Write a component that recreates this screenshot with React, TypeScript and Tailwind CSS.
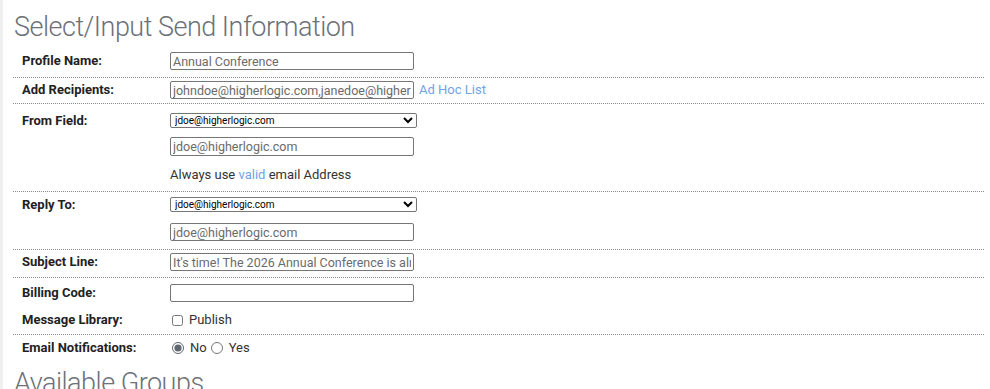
import { useState } from 'react'

const inputCls =
  'h-[18px] w-[244px] rounded-[2px] border border-[#767676] bg-white px-[2px] text-[12.5px] leading-none text-[#6b6b6b] outline-none'
const selectCls =
  'h-[15px] w-[247px] rounded-[2px] border border-[#767676] bg-white text-[10px] leading-none text-black outline-none'
const labelCls = 'flex w-[148px] shrink-0 items-center text-[13px] font-bold text-[#222]'

function App() {
  const [profile, setProfile] = useState('Annual Conference')
  const [recipients, setRecipients] = useState(
    'johndoe@higherlogic.com,janedoe@higherlogic.com'
  )
  const [fromSel, setFromSel] = useState('jdoe@higherlogic.com')
  const [fromAddr, setFromAddr] = useState('jdoe@higherlogic.com')
  const [replySel, setReplySel] = useState('jdoe@higherlogic.com')
  const [replyAddr, setReplyAddr] = useState('jdoe@higherlogic.com')
  const [subject, setSubject] = useState(
    "It's time! The 2026 Annual Conference is almost here"
  )
  const [billing, setBilling] = useState('')
  const [publish, setPublish] = useState(false)
  const [notify, setNotify] = useState('no')

  return (
    <div
      className="flex min-h-screen bg-white"
      style={{ fontFamily: 'Roboto, "Liberation Sans", sans-serif' }}
    >
      <div className="w-[3px] shrink-0 bg-[#efefef]" />
      <div className="flex-1 overflow-hidden pl-[10px] pr-[6px]">
        <h1 className="mt-[10px] pl-[1px] text-[27px] font-light leading-[34px] tracking-[-0.5px] text-[#6d717a]">
          Select/Input Send Information
        </h1>

        {/* Profile name */}
        <div className="flex border-b border-dotted border-[#8a8a8a] pb-[7px] pl-[9px] pt-[8px]">
          <div className={`${labelCls} h-[18px]`}>Profile Name:</div>
          <input
            className={inputCls}
            value={profile}
            onChange={(e) => setProfile(e.target.value)}
          />
        </div>

        {/* Recipients */}
        <div className="flex border-b border-dotted border-[#8a8a8a] pb-[4px] pl-[9px] pt-[3px]">
          <div className={`${labelCls} h-[18px]`}>Add Recipients:</div>
          <input
            className={inputCls}
            value={recipients}
            onChange={(e) => setRecipients(e.target.value)}
          />
          <a href="#" className="ml-[5px] text-[13px] leading-[18px] text-[#6fa3e6]">
            Ad Hoc List
          </a>
        </div>

        {/* From */}
        <div className="flex border-b border-dotted border-[#8a8a8a] pb-[7px] pl-[9px] pt-[9px]">
          <div className={`${labelCls} h-[15px]`}>From Field:</div>
          <div className="flex flex-col">
            <select
              className={selectCls}
              value={fromSel}
              onChange={(e) => setFromSel(e.target.value)}
            >
              <option>jdoe@higherlogic.com</option>
              <option>info@higherlogic.com</option>
            </select>
            <input
              className={`${inputCls} mt-[9px] h-[19px]`}
              value={fromAddr}
              onChange={(e) => setFromAddr(e.target.value)}
            />
            <div className="mt-[10px] text-[13px] leading-[18px] text-[#333]">
              Always use <span className="text-[#6fa3e6]">valid</span> email Address
            </div>
          </div>
        </div>

        {/* Reply to */}
        <div className="flex border-b border-dotted border-[#8a8a8a] pb-[8px] pl-[9px] pt-[5px]">
          <div className={`${labelCls} h-[15px]`}>Reply To:</div>
          <div className="flex flex-col">
            <select
              className={selectCls}
              value={replySel}
              onChange={(e) => setReplySel(e.target.value)}
            >
              <option>jdoe@higherlogic.com</option>
              <option>info@higherlogic.com</option>
            </select>
            <input
              className={`${inputCls} mt-[11px]`}
              value={replyAddr}
              onChange={(e) => setReplyAddr(e.target.value)}
            />
          </div>
        </div>

        {/* Subject */}
        <div className="flex border-b border-dotted border-[#8a8a8a] pb-[6px] pl-[9px] pt-[3px]">
          <div className={`${labelCls} h-[18px]`}>Subject Line:</div>
          <input
            className={inputCls}
            value={subject}
            onChange={(e) => setSubject(e.target.value)}
          />
        </div>

        {/* Billing + library */}
        <div className="border-b border-dotted border-[#8a8a8a] pb-[5px] pl-[9px] pt-[6px]">
          <div className="flex">
            <div className={`${labelCls} h-[18px]`}>Billing Code:</div>
            <input
              className={inputCls}
              value={billing}
              onChange={(e) => setBilling(e.target.value)}
            />
          </div>
          <div className="mt-[9px] flex">
            <div className={`${labelCls} h-[18px]`}>Message Library:</div>
            <label className="flex h-[18px] items-center text-[13px] text-[#333]">
              <input
                type="checkbox"
                className="m-0 ml-[2px] mr-[6px] h-[11px] w-[11px]"
                checked={publish}
                onChange={(e) => setPublish(e.target.checked)}
              />
              Publish
            </label>
          </div>
        </div>

        {/* Notifications */}
        <div className="flex pl-[9px] pt-[4px]">
          <div className={`${labelCls} h-[18px]`}>Email Notifications:</div>
          <label className="flex h-[18px] items-center text-[13px] text-[#333]">
            <input
              type="radio"
              name="notify"
              className="m-0 ml-[2px] mr-[6px] h-[12px] w-[12px] accent-[#5f6670]"
              checked={notify === 'no'}
              onChange={() => setNotify('no')}
            />
            No
          </label>
          <label className="ml-[4px] flex h-[18px] items-center text-[13px] text-[#333]">
            <input
              type="radio"
              name="notify"
              className="m-0 mr-[6px] h-[12px] w-[12px] accent-[#5f6670]"
              checked={notify === 'yes'}
              onChange={() => setNotify('yes')}
            />
            Yes
          </label>
        </div>

        <h2 className="mt-[9px] pl-[1px] text-[27px] font-light leading-[34px] tracking-[-0.5px] text-[#6d717a]">
          Available Groups
        </h2>
      </div>
    </div>
  )
}

export default App
